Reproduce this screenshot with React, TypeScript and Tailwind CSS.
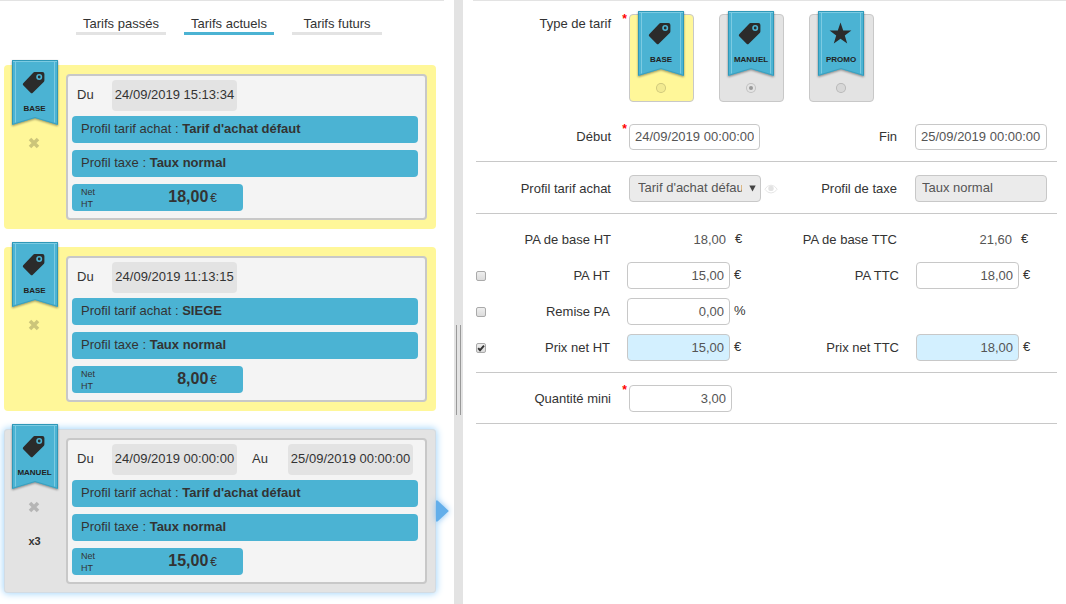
import { useState } from "react";
import type { ReactNode } from "react";
import clsx from "clsx";

type Kind = "BASE" | "MANUEL" | "PROMO";

type Tarif = {
  id: number;
  kind: Kind;
  from: string;
  to?: string;
  profile: string;
  tax: string;
  net: string;
  quantity?: string;
};

const TABS = ["Tarifs passés", "Tarifs actuels", "Tarifs futurs"];

const TARIFS: Tarif[] = [
  {
    id: 1,
    kind: "BASE",
    from: "24/09/2019 15:13:34",
    profile: "Tarif d'achat défaut",
    tax: "Taux normal",
    net: "18,00",
  },
  {
    id: 2,
    kind: "BASE",
    from: "24/09/2019 11:13:15",
    profile: "SIEGE",
    tax: "Taux normal",
    net: "8,00",
  },
  {
    id: 3,
    kind: "MANUEL",
    from: "24/09/2019 00:00:00",
    to: "25/09/2019 00:00:00",
    profile: "Tarif d'achat défaut",
    tax: "Taux normal",
    net: "15,00",
    quantity: "x3",
  },
];

const KINDS: Kind[] = ["BASE", "MANUEL", "PROMO"];

const fieldClass =
  "rounded-[4px] border border-[#c8c8c8] text-[13px] text-[#555] outline-none focus:border-[#4bb3d3]";

function Ribbon({ kind }: { kind: Kind }) {
  return (
    <span className="relative block h-[66px] w-[46px]">
      <svg
        viewBox="0 0 46 66"
        className="block h-[66px] w-[46px] overflow-visible drop-shadow-[0_1px_1px_rgba(0,0,0,0.4)]"
        aria-hidden="true"
      >
        <path d="M0 0H46V65L23 58L0 65Z" fill="#4bb3d3" />
        <path d="M0.5 64.3V0.5H45.5V64.3" fill="none" stroke="#2f98b8" />
        <path d="M0.5 64.3L23 57.5L45.5 64.3" fill="none" stroke="#3a9fbe" />
        <path d="M1 1.5H45M3.5 1V62.5M42.5 1V62.5" fill="none" stroke="#7ccbe2" />
        {kind === "PROMO" ? (
          <path
            d="M22.5 11.5L25.2 19.4L33.4 19.5L26.8 24.5L29.2 32.5L22.5 27.7L15.8 32.5L18.2 24.5L11.6 19.5L19.8 19.4Z"
            fill="#2b2b2b"
          />
        ) : (
          <>
            <path
              d="M22.6 12H30.4Q32.4 12 32.4 14V20.2Q32.4 21.2 31.7 21.9L20.8 32.7Q19.7 33.7 18.6 32.7L11.2 25.3Q10.3 24.3 11.2 23.3L21.2 12.7Q21.8 12 22.6 12Z"
              fill="#2b2b2b"
            />
            <circle cx="27.2" cy="17" r="2.2" fill="none" stroke="#4bb3d3" strokeWidth="1.6" />
          </>
        )}
      </svg>
      <span className="absolute inset-x-0 top-[43px] text-center text-[8px] leading-[11px] font-bold text-[#222]">
        {kind}
      </span>
    </span>
  );
}

function Cross() {
  return (
    <svg viewBox="0 0 12 12" className="size-[12px]" aria-hidden="true">
      <path d="M2 2L10 10M10 2L2 10" stroke="#000" strokeOpacity="0.2" strokeWidth="3.6" />
    </svg>
  );
}

function DateChip({ children }: { children: ReactNode }) {
  return (
    <span className="flex h-[31px] w-[125px] items-center justify-center rounded-[4px] bg-[#e3e3e3] pb-[2px] whitespace-nowrap">
      {children}
    </span>
  );
}

function Band({ label, value }: { label: string; value: string }) {
  return (
    <div className="h-[27px] rounded-[4px] bg-[#4bb3d3] px-[9px] leading-[25px]">
      {label} : <strong>{value}</strong>
    </div>
  );
}

function TarifCard({ tarif, selected }: { tarif: Tarif; selected: boolean }) {
  return (
    <article
      className={clsx(
        "relative flex h-[164px] rounded-[4px] py-[9px] pr-[9px]",
        selected
          ? "bg-[#e3e3e3] shadow-[0_0_7px_1px_#a9d8fb] ring-1 ring-[#d3dbe2] ring-inset"
          : "bg-[#fff799]"
      )}
    >
      <div className="-mt-[14px] flex w-[62px] shrink-0 flex-col items-center pr-[1px]">
        <Ribbon kind={tarif.kind} />
        <button type="button" aria-label="Supprimer" className="mt-[11px] mr-[2px]">
          <Cross />
        </button>
        {tarif.quantity && (
          <span className="mt-[21px] text-[11px] leading-[14px] font-bold">{tarif.quantity}</span>
        )}
      </div>
      <div className="flex min-w-0 flex-1 flex-col gap-[7px] rounded-[4px] border-2 border-[#c8c8c8] bg-[#f4f4f4] py-[4px] pr-[7px] pl-[4px]">
        <div className="-mb-[2px] flex">
          <span className="w-[40px] pl-[5px] leading-[29px]">Du</span>
          <DateChip>{tarif.from}</DateChip>
          {tarif.to && (
            <>
              <span className="w-[51px] pl-[15px] leading-[29px]">Au</span>
              <DateChip>{tarif.to}</DateChip>
            </>
          )}
        </div>
        <Band label="Profil tarif achat" value={tarif.profile} />
        <Band label="Profil taxe" value={tarif.tax} />
        <div className="flex h-[27px] w-[171px] items-center justify-between rounded-[4px] bg-[#4bb3d3] pr-[26px] pl-[9px]">
          <span className="text-[9px] leading-[12px]">
            Net
            <br />
            HT
          </span>
          <span className="flex items-baseline gap-[2px]">
            <strong className="text-[16px]">{tarif.net}</strong>
            <span className="text-[12px]">€</span>
          </span>
        </div>
      </div>
      {selected && (
        <svg
          viewBox="0 0 13 22"
          className="absolute top-[71px] left-full h-[22px] w-[13px] overflow-visible drop-shadow-[0_0_3px_#7fbdf2]"
          aria-hidden="true"
        >
          <path d="M0 0.5H1.5L12.8 11L1.5 21.5H0Z" fill="#62aeea" />
        </svg>
      )}
    </article>
  );
}

function Required({ show }: { show?: boolean }) {
  return (
    <span className="w-[18px] shrink-0 self-start pr-[2px] text-right text-[12px] leading-[10px] font-bold text-[#f00]">
      {show && "*"}
    </span>
  );
}

function Label({ htmlFor, children }: { htmlFor?: string; children: ReactNode }) {
  return (
    <label htmlFor={htmlFor} className="flex-1 text-right whitespace-nowrap">
      {children}
    </label>
  );
}

function Row({ className, children }: { className?: string; children: ReactNode }) {
  return <div className={clsx("grid grid-cols-[290fr_291fr]", className)}>{children}</div>;
}

// Right-aligned label, then a fixed track so that the fields line up.
function Cell({
  id,
  label,
  required,
  end,
  children,
}: {
  id?: string;
  label: string;
  required?: boolean;
  end?: boolean;
  children: ReactNode;
}) {
  return (
    <div className="flex min-w-0 items-center">
      <Label htmlFor={id}>{label}</Label>
      <Required show={required} />
      <div className={clsx("flex shrink-0 items-center", end ? "w-[142px]" : "w-[137px]")}>
        {children}
      </div>
    </div>
  );
}

function Check({ label, defaultChecked }: { label: string; defaultChecked?: boolean }) {
  return (
    <span className="relative flex size-[10px] shrink-0">
      <input
        type="checkbox"
        aria-label={label}
        defaultChecked={defaultChecked}
        className="peer size-[10px] appearance-none rounded-[2px] border border-[#aaa] bg-linear-to-b from-[#eee] to-[#dcdcdc]"
      />
      <svg
        viewBox="0 0 10 10"
        className="pointer-events-none absolute inset-0 hidden peer-checked:block"
        aria-hidden="true"
      >
        <path d="M2.2 5.2L4 7.2L8 2.6" fill="none" stroke="#333" strokeWidth="1.9" />
      </svg>
    </span>
  );
}

function AmountRow({
  id,
  ht,
  htValue,
  unit,
  ttc,
  ttcValue,
  checked,
  highlight,
}: {
  id: string;
  ht: string;
  htValue: string;
  unit: string;
  ttc?: string;
  ttcValue?: string;
  checked?: boolean;
  highlight?: boolean;
}) {
  const input = clsx(
    fieldClass,
    "h-[27px] w-[103px] px-[5px] text-right",
    highlight ? "bg-[#d3f0ff]" : "bg-white"
  );
  return (
    <Row className="h-[27px]">
      <div className="flex items-center pr-[2px]">
        <Check label={`Calculer ${ht}`} defaultChecked={checked} />
        <Label htmlFor={`${id}-ht`}>{ht}</Label>
        <div className="ml-[17px] flex w-[137px] shrink-0 gap-[4px]">
          <input id={`${id}-ht`} type="text" defaultValue={htValue} className={input} />
          <span className="leading-[25px]">{unit}</span>
        </div>
      </div>
      {ttc && (
        <div className="flex items-center">
          <Label htmlFor={`${id}-ttc`}>{ttc}</Label>
          <div className="ml-[17px] flex w-[141px] shrink-0 gap-[4px]">
            <input id={`${id}-ttc`} type="text" defaultValue={ttcValue} className={input} />
            <span className="leading-[25px]">{unit}</span>
          </div>
        </div>
      )}
    </Row>
  );
}

function BaseAmount({ value }: { value: string }) {
  return (
    <>
      <output className="w-[97px] text-right text-[#555]">{value}</output>
      <span className="ml-[9px] pb-[2px]">€</span>
    </>
  );
}

function TarifForm() {
  const [kind, setKind] = useState<Kind>("MANUEL");

  return (
    <form className="pr-[9px] pl-[3px]">
      <fieldset className="flex pt-[13px]" aria-labelledby="type-tarif">
        <span id="type-tarif" className="w-[135px] pt-[1px] text-right">
          Type de tarif
        </span>
        <Required show />
        <div className="flex gap-[25px]">
          {KINDS.map((k) => (
            <label
              key={k}
              className={clsx(
                "flex h-[88px] w-[65px] flex-col items-center rounded-[4px] border border-[#c8c8c8]",
                k === "BASE" ? "bg-[#fff799]" : "bg-[#e3e3e3]"
              )}
            >
              <span className="-mt-[4px] mr-[1px]">
                <Ribbon kind={k} />
              </span>
              <input
                type="radio"
                name="kind"
                checked={kind === k}
                onChange={() => setKind(k)}
                className="mt-[6px] mr-[1px] size-[10px] appearance-none rounded-full border border-black/15 bg-black/5 p-[2px] checked:bg-[#999] checked:bg-clip-content"
              />
            </label>
          ))}
        </div>
      </fieldset>

      <Row className="border-b border-[#c8c8c8] pt-[22px] pb-[11px]">
        <Cell id="debut" label="Début" required>
          <input
            id="debut"
            type="text"
            defaultValue="24/09/2019 00:00:00"
            className={clsx(fieldClass, "h-[26px] w-[131px] bg-white px-[5px] pb-[2px]")}
          />
        </Cell>
        <Cell id="fin" label="Fin" end>
          <input
            id="fin"
            type="text"
            defaultValue="25/09/2019 00:00:00"
            className={clsx(fieldClass, "h-[26px] w-[132px] bg-white px-[5px] pb-[2px]")}
          />
        </Cell>
      </Row>

      <Row className="border-b border-[#c8c8c8] pt-[13px] pb-[11px]">
        <Cell id="profil" label="Profil tarif achat">
          <span className="relative block w-[132px] shrink-0">
            <select
              id="profil"
              className={clsx(
                fieldClass,
                "block h-[27px] w-full appearance-none bg-[#ebebeb] pr-[18px] pb-[2px] pl-[8px]"
              )}
            >
              <option>Tarif d'achat défaut</option>
            </select>
            <svg
              viewBox="0 0 7 7"
              className="pointer-events-none absolute top-[10px] right-[5px] size-[7px]"
              aria-hidden="true"
            >
              <path d="M0.3 0.5H6.7L3.5 6.5Z" fill="#444" />
            </svg>
          </span>
          <svg viewBox="0 0 14 10" className="ml-[3px] h-[10px] w-[14px] shrink-0" aria-hidden="true">
            <path
              d="M0.8 5.2Q3.3 1.2 7 1.2T13.2 5.2Q10.7 9 7 9T0.8 5.2Z"
              fill="none"
              stroke="#e6e6e6"
            />
            <circle cx="7" cy="4.4" r="2.7" fill="#e3e3e3" />
          </svg>
        </Cell>
        <Cell id="taxe" label="Profil de taxe" end>
          <input
            id="taxe"
            type="text"
            readOnly
            defaultValue="Taux normal"
            className={clsx(fieldClass, "h-[27px] w-[132px] bg-[#ebebeb] px-[6px] pb-[2px]")}
          />
        </Cell>
      </Row>

      <div className="flex flex-col gap-[9px] border-b border-[#c8c8c8] pt-[12px] pb-[11px]">
        <Row className="h-[27px]">
          <Cell label="PA de base HT">
            <BaseAmount value="18,00" />
          </Cell>
          <Cell label="PA de base TTC" end>
            <BaseAmount value="21,60" />
          </Cell>
        </Row>
        <AmountRow id="pa" ht="PA HT" htValue="15,00" unit="€" ttc="PA TTC" ttcValue="18,00" />
        <AmountRow id="remise" ht="Remise PA" htValue="0,00" unit="%" />
        <AmountRow
          id="net"
          ht="Prix net HT"
          htValue="15,00"
          unit="€"
          ttc="Prix net TTC"
          ttcValue="18,00"
          checked
          highlight
        />
      </div>

      <Row className="border-b border-[#c8c8c8] pt-[12px] pb-[11px]">
        <Cell id="quantite" label="Quantité mini" required>
          <input
            id="quantite"
            type="text"
            defaultValue="3,00"
            className={clsx(fieldClass, "h-[27px] w-[103px] bg-white px-[5px] text-right")}
          />
        </Cell>
      </Row>
    </form>
  );
}

export default function App() {
  const [tab, setTab] = useState(1);

  return (
    <main className="grid min-h-screen grid-cols-[minmax(0,454fr)_9px_minmax(0,603fr)] bg-white font-['Liberation_Sans',Arial,sans-serif] text-[13px] leading-[18px] text-[#333]">
      <section className="mr-[6px]">
        <div className="mr-[4px] border-t border-[#e3e3e3]" />
        <nav className="flex gap-[18px] pt-[12px] pl-[76px]">
          {TABS.map((label, i) => (
            <button
              key={label}
              type="button"
              onClick={() => setTab(i)}
              className={clsx(
                "h-[22px] w-[90px] border-b-3 pt-[2px] text-center whitespace-nowrap",
                tab === i ? "border-[#4bb3d3]" : "border-[#e3e3e3]"
              )}
            >
              {label}
            </button>
          ))}
        </nav>
        <div className="flex flex-col gap-[18px] pt-[30px] pr-[12px] pb-[11px] pl-[4px]">
          {TARIFS.map((t) => (
            <TarifCard key={t.id} tarif={t} selected={t.id === 3} />
          ))}
        </div>
      </section>

      <div className="bg-[#e3e3e3] pt-[325px] pl-[2px]" role="separator" aria-orientation="vertical">
        <div className="h-[90px] w-[5px] border-x border-[#999]" />
      </div>

      <section className="ml-[10px] border-t border-[#e3e3e3]">
        <TarifForm />
      </section>
    </main>
  );
}
